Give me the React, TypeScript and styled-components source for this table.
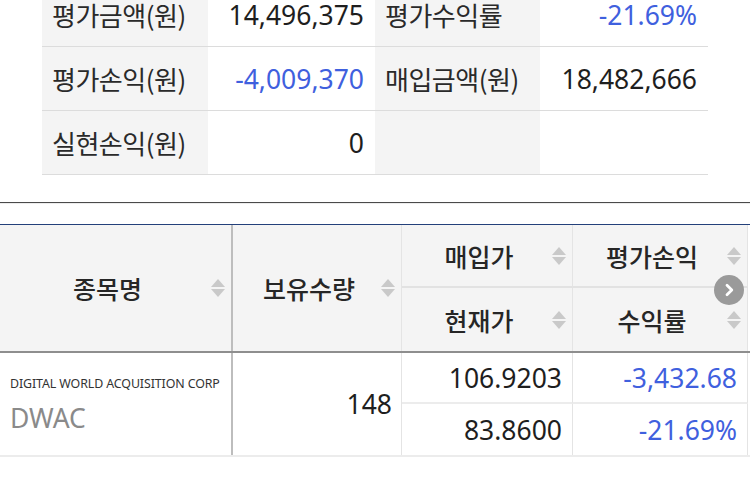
import React, { FC } from "react";
import styled, { createGlobalStyle } from "styled-components";

const GlobalStyle = createGlobalStyle`
  html, body {
    margin: 0;
    padding: 0;
    background: #fff;
    overflow: hidden;
  }
  body {
    width: 750px;
    height: 498px;
    font-family: "Noto Sans", "Noto Sans CJK KR", sans-serif;
    color: #222;
  }
`;

const BLUE = "#3f60de";

interface ISummaryItem {
  label: string;
  value: string;
  blue?: boolean;
}

const summary: ISummaryItem[][] = [
  [
    { label: "평가금액(원)", value: "14,496,375" },
    { label: "평가수익률", value: "-21.69%", blue: true }
  ],
  [
    { label: "평가손익(원)", value: "-4,009,370", blue: true },
    { label: "매입금액(원)", value: "18,482,666" }
  ],
  [
    { label: "실현손익(원)", value: "0" },
    { label: "", value: "" }
  ]
];

/**
 * Little up/down sort arrows next to the column titles
 */
const SortIcon: FC = () => (
  <SortSvg width="14" height="18" viewBox="0 0 14 18">
    <path d="M7 0 L14 8 L0 8 Z" fill="#c9c9c9" />
    <path d="M0 10 L14 10 L7 18 Z" fill="#c9c9c9" />
  </SortSvg>
);

export default function App() {
  return (
    <Page>
      <GlobalStyle />
      <Summary>
        {summary.map((row, i) =>
          row.map((item, j) => (
            <React.Fragment key={`${i}-${j}`}>
              <Label>{item.label}</Label>
              <Value blue={!!item.blue}>{item.value}</Value>
            </React.Fragment>
          ))
        )}
      </Summary>

      <Divider />

      <Table>
        <Head>
          <HeadCell rowSpan2 strong>
            <HeadText>종목명</HeadText>
            <SortIcon />
          </HeadCell>
          <HeadCell rowSpan2>
            <HeadText>보유수량</HeadText>
            <SortIcon />
          </HeadCell>
          <HeadCell>
            <HeadText>매입가</HeadText>
            <SortIcon />
          </HeadCell>
          <HeadCell>
            <HeadText>평가손익</HeadText>
            <SortIcon />
          </HeadCell>
          <HeadCell bottom>
            <HeadText>현재가</HeadText>
            <SortIcon />
          </HeadCell>
          <HeadCell bottom>
            <HeadText>수익률</HeadText>
            <SortIcon />
          </HeadCell>
          <NextButton>
            <svg width="14" height="14" viewBox="0 0 14 14">
              <path
                d="M5 2.2 L9.8 7 L5 11.8"
                fill="none"
                stroke="#fff"
                strokeWidth="2.8"
                strokeLinecap="round"
                strokeLinejoin="round"
              />
            </svg>
          </NextButton>
        </Head>

        <Body>
          <NameCell>
            <FullName>DIGITAL WORLD ACQUISITION CORP</FullName>
            <Ticker>DWAC</Ticker>
          </NameCell>
          <QtyCell>148</QtyCell>
          <NumCell top>106.9203</NumCell>
          <NumCell top blue>
            -3,432.68
          </NumCell>
          <NumCell>83.8600</NumCell>
          <NumCell blue>-21.69%</NumCell>
        </Body>
      </Table>
    </Page>
  );
}

const Page = styled.div`
  width: 750px;
  height: 498px;
  overflow: hidden;
`;

const Summary = styled.div`
  margin: -17px 42px 0 42px;
  display: grid;
  grid-template-columns: 166px 167px 165px 168px;
  grid-auto-rows: 64px;
`;

const Label = styled.div`
  display: flex;
  align-items: center;
  padding-left: 10px;

  background: #f4f4f4;
  border-bottom: 1px solid #dcdcdc;

  font-family: "Noto Sans CJK KR", sans-serif;
  font-size: 26px;
  color: #2a2a2a;
  letter-spacing: -0.5px;
`;

const Value = styled.div<{ blue: boolean }>`
  display: flex;
  align-items: center;
  justify-content: flex-end;
  padding-right: 11px;

  border-bottom: 1px solid #dcdcdc;

  font-size: 26.5px;
  color: ${p => (p.blue ? BLUE : "#1e1e1e")};
`;

const Divider = styled.div`
  margin-top: 27px;
  height: 1px;
  background: #4a4a4a;
  border-bottom: 1px solid #ececec;
`;

const Table = styled.div`
  margin-top: 20px;
  border-top: 1px solid #23407a;
`;

const Head = styled.div`
  position: relative;
  display: grid;
  grid-template-columns: 233px 169px 171px 175px;
  grid-template-rows: 63px 63px;
  border-bottom: 2px solid #8e8e8e;
`;

const HeadCell = styled.div<{ rowSpan2?: boolean; strong?: boolean; bottom?: boolean }>`
  grid-row: ${p => (p.rowSpan2 ? "span 2" : "auto")};
  display: flex;
  align-items: center;
  justify-content: center;
  padding-right: 6px;

  background: #f4f4f4;
  border-right: ${p => (p.strong ? "2px solid #bdbdbd" : "1px solid #e4e4e4")};
  border-bottom: ${p => (p.rowSpan2 || p.bottom ? "none" : "2px solid #e2e2e2")};
`;

const HeadText = styled.span`
  flex: 1;
  text-align: center;
  font-family: "Noto Sans CJK KR", sans-serif;
  font-size: 25px;
  font-weight: 500;
  color: #262626;
  padding-left: 4px;
`;

const SortSvg = styled.svg`
  flex: none;
  display: block;
`;

const NextButton = styled.div`
  position: absolute;
  left: 714px;
  top: 50px;
  width: 30px;
  height: 30px;
  border-radius: 50%;
  background: #9a9a9a;

  display: flex;
  align-items: center;
  justify-content: center;
`;

const Body = styled.div`
  display: grid;
  grid-template-columns: 233px 169px 171px 175px;
  grid-template-rows: 51px 51px;
  border-bottom: 2px solid #ececec;
`;

const NameCell = styled.div`
  grid-row: span 2;
  display: flex;
  flex-direction: column;
  justify-content: center;
  gap: 12px;
  padding-left: 10px;
  padding-bottom: 0;
  border-right: 2px solid #bdbdbd;
`;

const FullName = styled.div`
  font-size: 12.4px;
  color: #333;
  letter-spacing: -0.1px;
`;

const Ticker = styled.div`
  font-size: 26.5px;
  line-height: 1.1;
  color: #8a8a8a;
`;

const QtyCell = styled.div`
  grid-row: span 2;
  display: flex;
  align-items: center;
  justify-content: flex-end;
  padding-right: 9px;
  border-right: 1px solid #e4e4e4;

  font-size: 26.5px;
  color: #1e1e1e;
`;

const NumCell = styled.div<{ blue?: boolean; top?: boolean }>`
  display: flex;
  align-items: center;
  justify-content: flex-end;
  padding-right: 10px;
  border-right: 1px solid #e4e4e4;
  border-bottom: ${p => (p.top ? "2px solid #ececec" : "none")};

  font-size: 26.5px;
  color: ${p => (p.blue ? BLUE : "#1e1e1e")};
`;
